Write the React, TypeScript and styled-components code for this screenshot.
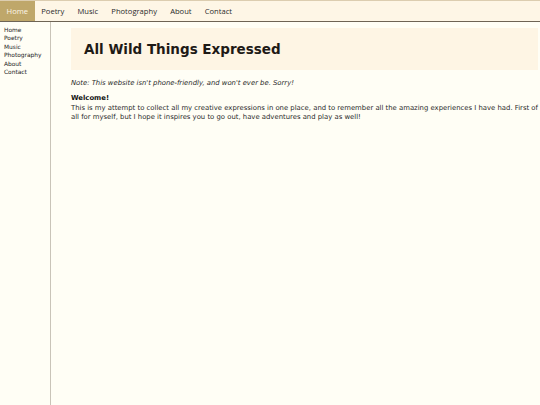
import React from "react";
import styled, { createGlobalStyle } from "styled-components";

const Global = createGlobalStyle`
  html, body { margin: 0; padding: 0; background: #fffef5; }
  body { font-family: "DejaVu Sans", Verdana, sans-serif; color: #222; }
  * { box-sizing: border-box; }
`;

const Page = styled.div`
  display: flex;
  flex-direction: column;
  min-height: 405px;
`;

const TopNav = styled.nav`
  display: flex;
  height: 22px;
  background: #fef6e6;
  border-top: 1px solid #dccdb0;
  border-bottom: 1px solid #6e6455;
`;

const NavItem = styled.a<{ $active?: boolean }>`
  display: flex;
  align-items: center;
  padding: 0 6.6px;
  font-family: "Open Sans", "Noto Sans", sans-serif;
  font-size: 7.6px;
  color: ${(p) => (p.$active ? "#fdf6e8" : "#2a2a2a")};
  background: ${(p) => (p.$active ? "#bfa76a" : "transparent")};
  text-decoration: none;
`;

const Body = styled.div`
  display: flex;
  flex: 1;
`;

const Sidebar = styled.aside`
  width: 51px;
  border-right: 1px solid #c9c4b8;
  padding: 4px 0 0 4px;
  display: flex;
  flex-direction: column;
`;

const SideLink = styled.a`
  font-size: 5.9px;
  line-height: 8.4px;
  color: #222;
  text-decoration: none;
`;

const Main = styled.main`
  flex: 1;
  padding: 6px 2px 0 20px;
`;

const Header = styled.header`
  background: #fef5e4;
  height: 42px;
  display: flex;
  align-items: center;
  padding-left: 13px;
`;

const Title = styled.h1`
  margin: 0;
  font-size: 13.5px;
  font-weight: bold;
  color: #1e1a16;
`;

const Note = styled.p`
  margin: 9px 0 0;
  font-size: 6.85px;
  font-style: italic;
  color: #2a2a2a;
`;

const Text = styled.p`
  margin: 7px 0 0;
  font-size: 6.86px;
  line-height: 9.6px;
  color: #2a2a2a;
`;

const Strong = styled.strong`
  color: #111;
`;

const items = ["Home", "Poetry", "Music", "Photography", "About", "Contact"];

export default function App() {
  return (
    <>
      <Global />
      <Page>
        <TopNav>
          {items.map((i, idx) => (
            <NavItem key={i} $active={idx === 0}>
              {i}
            </NavItem>
          ))}
        </TopNav>
        <Body>
          <Sidebar>
            {items.map((i) => (
              <SideLink key={i}>{i}</SideLink>
            ))}
          </Sidebar>
          <Main>
            <Header>
              <Title>All Wild Things Expressed</Title>
            </Header>
            <Note>Note: This website isn't phone-friendly, and won't ever be. Sorry!</Note>
            <Text>
              <Strong>Welcome!</Strong>
              <br />
              This is my attempt to collect all my creative expressions in one place, and to remember all the amazing experiences I have had. First of all for myself, but I hope it inspires you to go out, have adventures and play as well!
            </Text>
          </Main>
        </Body>
      </Page>
    </>
  );
}
